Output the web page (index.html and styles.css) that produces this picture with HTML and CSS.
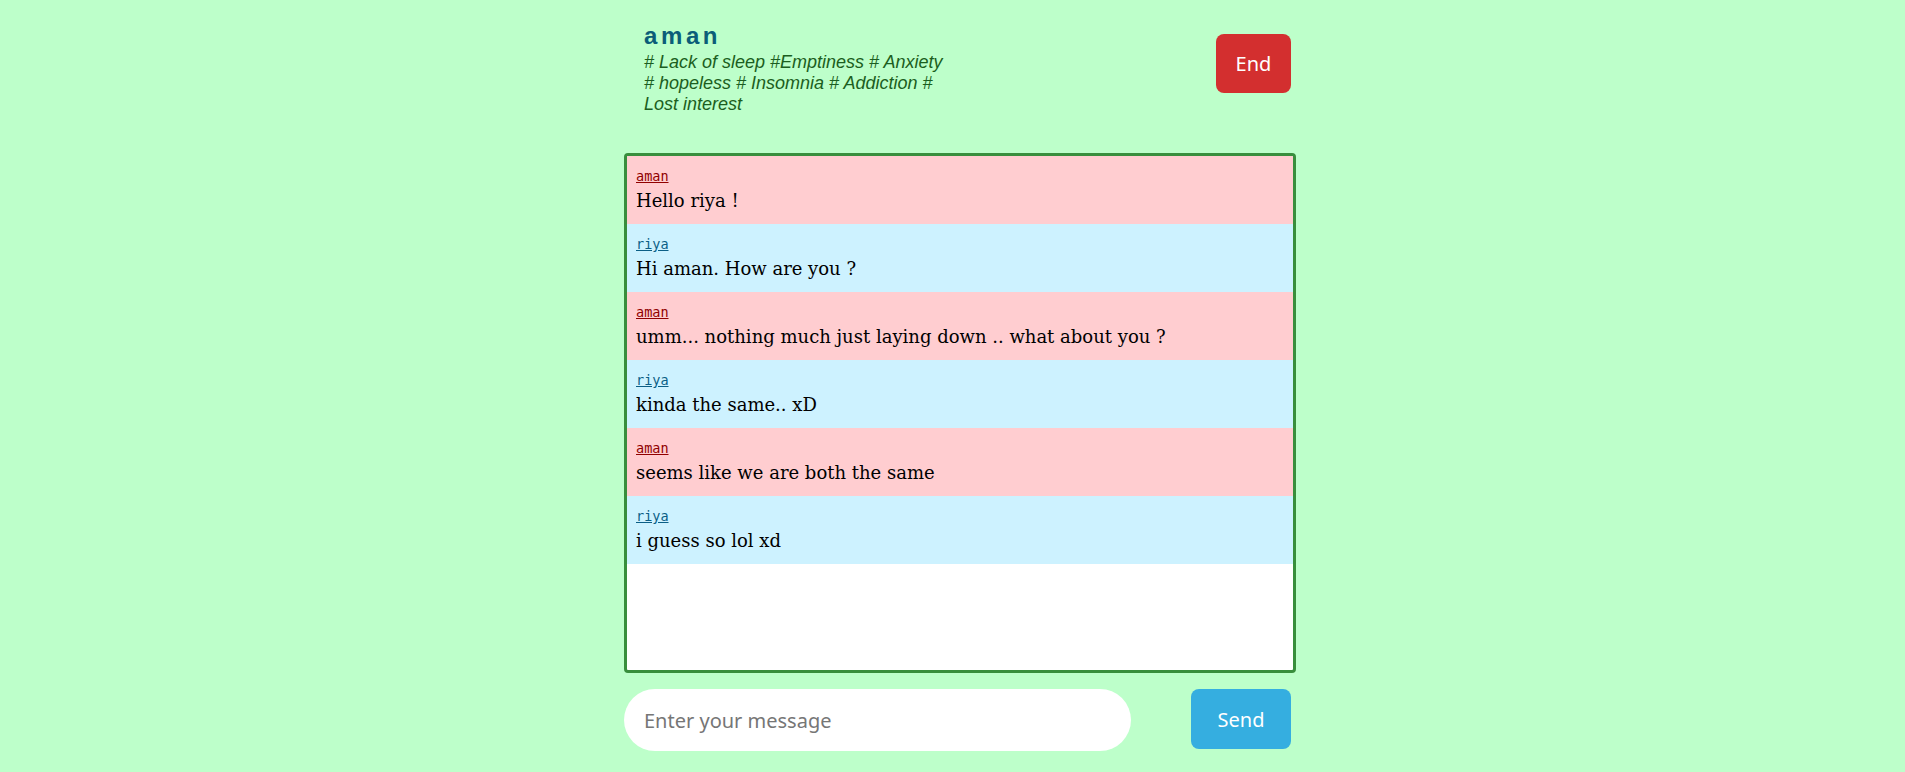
FILE: index.html
```html
<!DOCTYPE html>
<html lang="en">
<head>
<meta charset="utf-8">
<title>Chat</title>
<link rel="stylesheet" href="styles.css">
</head>
<body>
<div class="app">
  <header class="head">
    <div class="who">
      <h2 class="peer">aman</h2>
      <p class="tags"># Lack of sleep #Emptiness # Anxiety # hopeless # Insomnia # Addiction # Lost interest</p>
    </div>
    <button class="btn btn-end">End</button>
  </header>

  <div class="chat">
    <div class="msg msg-a"><span class="from from-a">aman</span><p class="text">Hello riya !</p></div>
    <div class="msg msg-b"><span class="from from-b">riya</span><p class="text">Hi aman. How are you ?</p></div>
    <div class="msg msg-a"><span class="from from-a">aman</span><p class="text">umm... nothing much just laying down .. what about you ?</p></div>
    <div class="msg msg-b"><span class="from from-b">riya</span><p class="text">kinda the same.. xD</p></div>
    <div class="msg msg-a"><span class="from from-a">aman</span><p class="text">seems like we are both the same</p></div>
    <div class="msg msg-b"><span class="from from-b">riya</span><p class="text">i guess so lol xd</p></div>
  </div>

  <form class="composer" onsubmit="return false">
    <input class="field" type="text" placeholder="Enter your message">
    <button class="btn btn-send" type="submit">Send</button>
  </form>
</div>
</body>
</html>
```

FILE: styles.css
```css
* { box-sizing: border-box; }

html, body {
  margin: 0;
  padding: 0;
  background: #bdffca;
}

body {
  font-family: "DejaVu Serif", serif;
}

.app {
  width: 687px;
  margin: 0 auto;
  padding-left: 15px;
}

.head {
  display: flex;
  justify-content: space-between;
  align-items: flex-start;
  padding: 22px 5px 0 20px;
}

.who {
  max-width: 310px;
}

.peer {
  margin: 0;
  font-family: "Liberation Sans", Arial, sans-serif;
  font-size: 24px;
  font-weight: bold;
  line-height: 28px;
  letter-spacing: 3.6px;
  color: #0b5d78;
}

.tags {
  margin: 2px 0 0;
  font-family: "Liberation Sans", Arial, sans-serif;
  font-style: italic;
  font-size: 18px;
  line-height: 21px;
  color: #1b5e20;
}

.btn {
  border: 0;
  border-radius: 8px;
  color: #fff;
  font-family: "Noto Sans", "Open Sans", sans-serif;
  font-size: 20px;
  padding: 0;
  cursor: pointer;
}

.btn-end {
  width: 75px;
  height: 59px;
  margin-top: 12px;
  background: #d32f2f;
}

.chat {
  margin-top: 38px;
  height: 520px;
  border: 3px solid #388e3c;
  border-radius: 4px;
  background: #fff;
  overflow: hidden;
}

.msg {
  height: 68px;
  padding: 13px 9px 0 9px;
}

.msg-a { background: #ffcdd0; }
.msg-b { background: #cdf2ff; }

.from {
  display: block;
  font-family: "DejaVu Sans Mono", monospace;
  font-size: 13.5px;
  line-height: 15px;
  text-decoration: underline;
}

.from-a { color: #900000; }
.from-b { color: #0b5f86; }

.text {
  margin: 6px 0 0;
  font-family: "DejaVu Serif", serif;
  font-size: 18px;
  line-height: 21px;
  color: #000;
}

.composer {
  display: flex;
  align-items: flex-start;
  justify-content: space-between;
  margin: 16px 5px 0 0;
}

.field {
  width: 507px;
  height: 62px;
  border: 0;
  border-radius: 31px;
  background: #fff;
  padding: 0 20px;
  font-family: "Noto Sans", "Open Sans", sans-serif;
  font-size: 20px;
  color: #222;
  outline: none;
}

.field::placeholder {
  color: #767676;
}

.btn-send {
  width: 100px;
  height: 60px;
  background: #35aee0;
}
```
